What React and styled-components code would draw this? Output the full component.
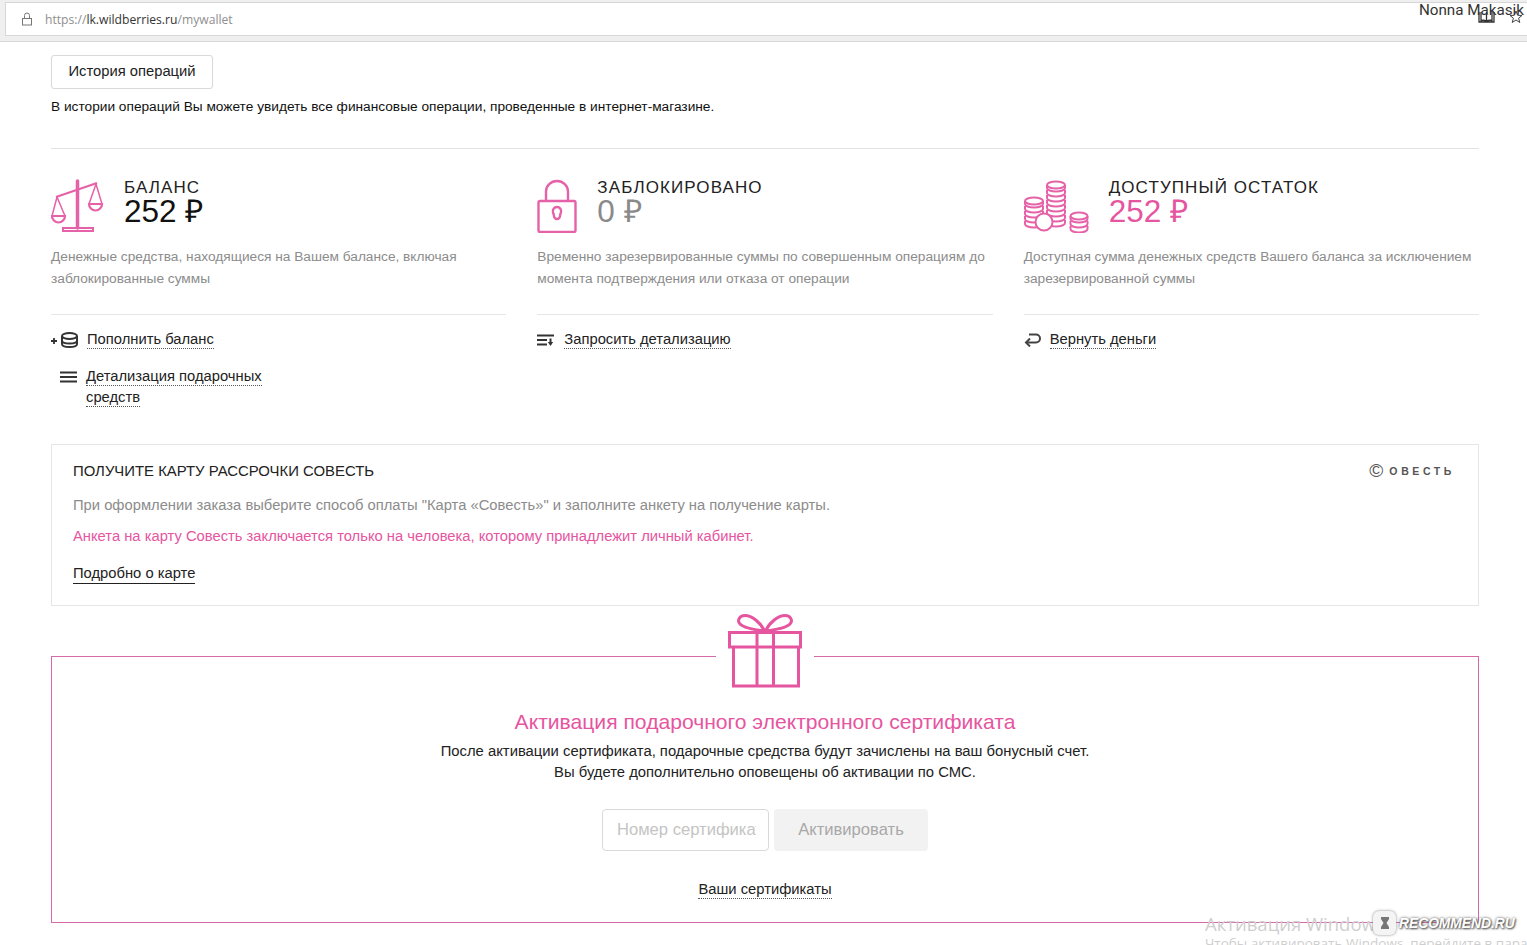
import React from "react";
import styled, { createGlobalStyle } from "styled-components";

const PINK = "#e6559f";
const ICON_PINK = "#e662a8";

const GlobalStyle = createGlobalStyle`
  html, body {
    margin: 0;
    padding: 0;
    background: #fff;
    font-family: "Liberation Sans", Arial, sans-serif;
    color: #1f1f1f;
  }
  * { box-sizing: border-box; }
`;

const ScalesIcon = () => (
  <svg width="54" height="54" viewBox="0 0 54 54" fill="none" stroke={ICON_PINK} strokeWidth="2">
    <path d="M26.500 2v47" strokeWidth="3.500" strokeLinecap="round" />
    <path d="M12 49h30v3H12z" />
    <path d="M5 18L46 4" strokeWidth="2.200" />
    <path d="M6 18L1 37h13L6 18M45 5l-7 20h13L45 5" strokeWidth="1.500" />
    <path d="M1 37a6.500 6.500 0 0 0 13 0zM38 25a6.500 6.500 0 0 0 13 0z" strokeWidth="2.200" />
  </svg>
);

const LockIcon = () => (
  <svg width="40" height="54" viewBox="0 0 40 54" fill="none" stroke={ICON_PINK} strokeWidth="2.400">
    <rect x="1.500" y="22" width="37" height="31" rx="1.500" />
    <path d="M9 22V12.500a11 10.500 0 0 1 22 0V22" />
    <path d="M16 33.500a4.200 4.200 0 1 1 8 0c-.5 1.500-1 2-1 3.500a3 3 0 0 1-6 0c0-1.500-.5-2-1-3.500z" />
  </svg>
);

const CoinStack = ({ x, y, count, rx }) => (
  <g>
    {Array.from({ length: count }).map((_, i) => (
      <path key={i} d={`M${x - rx} ${y + i * 5}v3a${rx} 3.500 0 0 0 ${rx * 2} 0v-3`} />
    ))}
    <ellipse cx={x} cy={y} rx={rx} ry="3.500" />
  </g>
);

const CoinsIcon = () => (
  <svg width="65" height="54" viewBox="0 0 65 54" fill="none" stroke={ICON_PINK} strokeWidth="2">
    <CoinStack x={32} y={6} count={8} rx={9} />
    <CoinStack x={10} y={22} count={5} rx={9} />
    <CoinStack x={55} y={37} count={3} rx={8.500} />
    <circle cx="20" cy="43" r="8.500" fill="#fff" />
  </svg>
);

const TopUpIcon = () => (
  <svg width="28" height="16" viewBox="0 0 28 16" fill="none" stroke="#333">
    <path d="M0 9h6M3 6v6" strokeWidth="1.800" />
    <ellipse cx="18.500" cy="4" rx="7.500" ry="3" strokeWidth="2" />
    <path d="M11 4v8c0 2 3.500 3 7.500 3s7.500-1 7.500-3V4M11 8.500c0 2 3.500 3 7.500 3s7.500-1 7.500-3" strokeWidth="2" />
  </svg>
);

const ListIcon = () => (
  <svg width="17" height="12" viewBox="0 0 17 12" fill="none" stroke="#333" strokeWidth="2">
    <path d="M0 1.500h17M0 6h17M0 10.500h17" />
  </svg>
);

const SortIcon = () => (
  <svg width="17" height="12" viewBox="0 0 17 12" fill="none" stroke="#333" strokeWidth="2">
    <path d="M0 1.500h17M0 6h10M0 10.500h10" />
    <path d="M13.500 4.500v5" />
    <path d="M10.800 8h5.400l-2.700 4z" fill="#333" stroke="none" />
  </svg>
);

const ReturnIcon = () => (
  <svg width="17" height="14" viewBox="0 0 17 14" fill="none" stroke="#444" strokeWidth="2">
    <path d="M5 1.500h7a4 4 0 0 1 0 8H2" />
    <path d="M6 5.500L2 9.500l4 4" />
  </svg>
);

const GiftIcon = () => (
  <svg width="74" height="74" viewBox="0 0 74 74" fill="none" stroke={PINK} strokeWidth="3">
    <path d="M1.500 18.500h71V33H1.500zM5.500 33v39h65V33M29 18.500V72M45.500 18.500V72" />
    <path d="M36.500 17C33 9 24 1.500 17 1.500 11 1.500 9 7 12 10c4 4 16 6 24.500 7zM37.500 17C41 9 50 1.500 57 1.500c6 0 8 5.500 5 8.500-4 4-16 6-24.500 7z" />
  </svg>
);

const LockGlyph = () => (
  <svg width="12" height="14" viewBox="0 0 12 14" fill="none" stroke="#777" strokeWidth="1">
    <rect x="1.500" y="6.500" width="9" height="6.500" />
    <path d="M3.500 6.500V3.500a2.500 2.500 0 0 1 5 0v3" />
  </svg>
);

const BookmarkGlyph = () => (
  <svg width="17" height="12" viewBox="0 0 17 12" fill="none" stroke="#333" strokeWidth="1.300">
    <path d="M1 1v10h15V1M3 1v8.500c2.500-.5 4.500 0 5.500 1 1-1 3-1.500 5.500-1V1M8.500 1v9.500" />
  </svg>
);

const StarGlyph = () => (
  <svg width="14" height="14" viewBox="0 0 14 14" fill="none" stroke="#444" strokeWidth="1">
    <path d="M7 1l1.700 4.300 4.300.2-3.400 2.700 1.200 4.300L7 10l-3.800 2.500 1.200-4.300L1 5.500l4.300-.2z" />
  </svg>
);

const balances = [
  {
    title: "БАЛАНС",
    amount: "252 ₽",
    tone: "#111",
    icon: <ScalesIcon />,
    iconWidth: 73,
    text: "Денежные средства, находящиеся на Вашем балансе, включая заблокированные суммы",
    links: [
      { icon: <TopUpIcon />, label: "Пополнить баланс", width: 36 },
      { icon: <ListIcon />, label: "Детализация подарочных средств", width: 26, indent: 9, narrow: true },
    ],
  },
  {
    title: "ЗАБЛОКИРОВАНО",
    amount: "0 ₽",
    tone: "#8a8a8a",
    icon: <LockIcon />,
    iconWidth: 60,
    text: "Временно зарезервированные суммы по совершенным операциям до момента подтверждения или отказа от операции",
    links: [{ icon: <SortIcon />, label: "Запросить детализацию", width: 27 }],
  },
  {
    title: "ДОСТУПНЫЙ ОСТАТОК",
    amount: "252 ₽",
    tone: PINK,
    icon: <CoinsIcon />,
    iconWidth: 85,
    text: "Доступная сумма денежных средств Вашего баланса за исключением зарезервированной суммы",
    links: [{ icon: <ReturnIcon />, label: "Вернуть деньги", width: 26 }],
  },
];

export default function App() {
  return (
    <Screen>
      <GlobalStyle />
      <AddressBand>
        <AddressBar>
          <LockGlyph />
          <Url>
            https://<b>lk.wildberries.ru</b>/mywallet
          </Url>
          <BarIcons>
            <BookmarkGlyph />
            <StarGlyph />
          </BarIcons>
        </AddressBar>
      </AddressBand>
      <UserName>Nonna Makasik</UserName>

      <Content>
        <HistoryButton>История операций</HistoryButton>
        <HistoryNote>
          В истории операций Вы можете увидеть все финансовые операции, проведенные в интернет-магазине.
        </HistoryNote>

        <Columns>
          {balances.map((item) => (
            <Column key={item.title}>
              <ColumnHead>
                <IconSlot $width={item.iconWidth}>{item.icon}</IconSlot>
                <div>
                  <ColumnTitle>{item.title}</ColumnTitle>
                  <Amount $tone={item.tone}>{item.amount}</Amount>
                </div>
              </ColumnHead>
              <ColumnText>{item.text}</ColumnText>
              <Links>
                {item.links.map((link) => (
                  <LinkRow key={link.label} $narrow={link.narrow}>
                    <LinkIcon $width={link.width} $indent={link.indent}>
                      {link.icon}
                    </LinkIcon>
                    <div>
                      <DottedLink>{link.label}</DottedLink>
                    </div>
                  </LinkRow>
                ))}
              </Links>
            </Column>
          ))}
        </Columns>

        <CardPromo>
          <PromoHead>
            <PromoTitle>ПОЛУЧИТЕ КАРТУ РАССРОЧКИ СОВЕСТЬ</PromoTitle>
            <SovestLogo>
              <span>©</span>ОВЕСТЬ
            </SovestLogo>
          </PromoHead>
          <PromoText>
            При оформлении заказа выберите способ оплаты "Карта «Совесть»" и заполните анкету на получение карты.
          </PromoText>
          <PromoWarning>
            Анкета на карту Совесть заключается только на человека, которому принадлежит личный кабинет.
          </PromoWarning>
          <PromoLink>Подробно о карте</PromoLink>
        </CardPromo>

        <GiftPanel>
          <GiftBadge>
            <GiftIcon />
          </GiftBadge>
          <GiftTitle>Активация подарочного электронного сертификата</GiftTitle>
          <GiftText>
            После активации сертификата, подарочные средства будут зачислены на ваш бонусный счет.
            <br />
            Вы будете дополнительно оповещены об активации по СМС.
          </GiftText>
          <GiftForm>
            <CertInput placeholder="Номер сертификата" readOnly />
            <ActivateButton>Активировать</ActivateButton>
          </GiftForm>
          <DottedLink>Ваши сертификаты</DottedLink>
        </GiftPanel>
      </Content>

      <WindowsNote>
        Активация Windows
        <small>Чтобы активировать Windows, перейдите в параметры</small>
      </WindowsNote>
      <Watermark>
        <WatermarkBadge>
          <svg width="12" height="14" viewBox="0 0 12 14" fill="#777">
            <path d="M2 1h8v2L7.500 7 10 11v2H2v-2l2.500-4L2 3z" />
          </svg>
        </WatermarkBadge>
        <WatermarkText>RECOMMEND.RU</WatermarkText>
      </Watermark>
    </Screen>
  );
}

const Screen = styled.div`
  position: relative;
  width: 1527px;
  height: 945px;
  overflow: hidden;
`;

const AddressBand = styled.header`
  height: 42px;
  padding: 2px 0 6px 5px;
  background: #efefef;
  border-bottom: 1px solid #d8d8d8;
`;

const AddressBar = styled.div`
  display: flex;
  align-items: center;
  height: 34px;
  padding: 0 3px 0 15px;
  background: #fff;
  border: 1px solid #d6d6d6;
  border-right: none;
`;

const Url = styled.div`
  margin-left: 12px;
  font-family: "Open Sans", sans-serif;
  font-size: 12.150px;
  color: #8f8f8f;
  b {
    font-weight: 400;
    color: #333;
  }
`;

const BarIcons = styled.div`
  display: flex;
  align-items: center;
  gap: 14px;
  margin-left: auto;
  margin-top: -4px;
  margin-right: 1px;
`;

const UserName = styled.div`
  position: absolute;
  top: 2px;
  right: 3px;
  font-family: Roboto, sans-serif;
  font-size: 15.200px;
  line-height: 17px;
  color: #333;
`;

const Content = styled.main`
  padding: 13px 48px 0 51px;
`;

const HistoryButton = styled.button`
  display: block;
  width: 162px;
  height: 34px;
  padding: 0 0 2px;
  background: #fff;
  border: 1px solid #d9d9d9;
  border-radius: 3px;
  font-family: inherit;
  font-size: 14.750px;
  color: #222;
`;

const HistoryNote = styled.p`
  margin: 8px 0 0;
  padding-bottom: 31px;
  border-bottom: 1px solid #e3e3e3;
  font-size: 13.700px;
  line-height: 20px;
  color: #111;
`;

const Columns = styled.section`
  display: grid;
  grid-template-columns: repeat(3, 1fr);
  column-gap: 31px;
  height: 295px;
  padding-top: 30px;
`;

const Column = styled.article`
  display: flex;
  flex-direction: column;
`;

const ColumnHead = styled.div`
  display: flex;
  align-items: flex-start;
  height: 67px;
`;

const IconSlot = styled.div`
  flex: none;
  width: ${(props) => props.$width}px;
  height: 54px;
`;

const ColumnTitle = styled.div`
  font-size: 17px;
  line-height: 17px;
  letter-spacing: 1.100px;
  color: #222;
`;

const Amount = styled.div`
  font-size: 31.500px;
  line-height: 30px;
  color: ${(props) => props.$tone};
`;

const ColumnText = styled.p`
  height: 69px;
  margin: 0;
  border-bottom: 1px solid #e6e6e6;
  font-size: 13.700px;
  line-height: 22px;
  color: #8c8c8c;
`;

const Links = styled.div`
  display: flex;
  flex-direction: column;
  gap: 16px;
  padding-top: 14px;
`;

const LinkRow = styled.div`
  display: flex;
  align-items: flex-start;
  width: ${(props) => (props.$narrow ? "240px" : "auto")};
`;

const LinkIcon = styled.span`
  display: flex;
  flex: none;
  align-items: center;
  height: 21px;
  width: ${(props) => props.$width}px;
  margin-left: ${(props) => props.$indent || 0}px;
`;

const DottedLink = styled.span`
  padding-bottom: 1px;
  border-bottom: 1px dotted #555;
  font-size: 14.750px;
  line-height: 21px;
  color: #222;
`;

const CardPromo = styled.section`
  height: 162px;
  padding: 15px 21px 0;
  border: 1px solid #e6e6e6;
`;

const PromoHead = styled.div`
  display: flex;
  align-items: center;
  justify-content: space-between;
`;

const PromoTitle = styled.div`
  font-size: 14.900px;
  line-height: 18px;
  color: #222;
`;

const SovestLogo = styled.div`
  margin-right: 2px;
  font-size: 10.500px;
  font-weight: 700;
  letter-spacing: 3.600px;
  color: #555;
  span {
    font-size: 19px;
    font-weight: 400;
    letter-spacing: 6px;
    vertical-align: -2px;
  }
`;

const PromoText = styled.p`
  margin: 13px 0 0;
  font-size: 14.750px;
  line-height: 20px;
  color: #8c8c8c;
`;

const PromoWarning = styled.p`
  margin: 11px 0 0;
  font-size: 14.750px;
  line-height: 20px;
  color: ${PINK};
`;

const PromoLink = styled.span`
  display: inline-block;
  margin-top: 18px;
  padding-bottom: 0;
  border-bottom: 1px solid #222;
  font-size: 14.750px;
  line-height: 19px;
  color: #222;
`;

const GiftPanel = styled.section`
  position: relative;
  height: 267px;
  margin-top: 50px;
  padding-top: 52px;
  border: 1px solid #d66aa8;
  text-align: center;
`;

const GiftBadge = styled.div`
  position: absolute;
  top: -43px;
  left: 664px;
  display: flex;
  justify-content: center;
  width: 98px;
  background: #fff;
`;

const GiftTitle = styled.h2`
  margin: 0;
  font-size: 21.100px;
  font-weight: 400;
  line-height: 26px;
  color: ${PINK};
`;

const GiftText = styled.p`
  margin: 6px 0 0;
  font-size: 14.820px;
  line-height: 21px;
  color: #222;
`;

const GiftForm = styled.div`
  display: flex;
  justify-content: center;
  gap: 5px;
  margin: 26px 0 28px;
`;

const CertInput = styled.input`
  width: 167px;
  height: 42px;
  padding: 0 12px 0 14px;
  background: #fff;
  border: 1px solid #d9d9d9;
  border-radius: 4px;
  font-family: inherit;
  font-size: 16.600px;
  outline: none;
  &::placeholder {
    color: #c4c4c4;
    opacity: 1;
  }
`;

const ActivateButton = styled.button`
  width: 154px;
  height: 42px;
  background: #f2f2f2;
  border: none;
  border-radius: 4px;
  font-family: inherit;
  font-size: 16.600px;
  color: #a8a8a8;
`;

const WindowsNote = styled.div`
  position: absolute;
  left: 1205px;
  top: 912px;
  width: 322px;
  overflow: hidden;
  white-space: nowrap;
  font-family: "Open Sans", sans-serif;
  font-size: 18.500px;
  line-height: 24px;
  color: #cfcfcf;
  small {
    display: block;
    margin-top: -2px;
    font-size: 13.500px;
    line-height: 18px;
  }
`;

const Watermark = styled.div`
  position: absolute;
  left: 1373px;
  top: 911px;
  display: flex;
  align-items: center;
  gap: 3px;
`;

const WatermarkBadge = styled.div`
  display: flex;
  align-items: center;
  justify-content: center;
  width: 23px;
  height: 24px;
  background: #f4f4f4;
  border-radius: 6px;
  box-shadow: 0 0 3px #888;
`;

const WatermarkText = styled.div`
  font-size: 13.800px;
  font-style: italic;
  font-weight: 700;
  color: #fff;
  text-shadow: 0 0 3px #555, 1px 1px 2px #555;
`;
